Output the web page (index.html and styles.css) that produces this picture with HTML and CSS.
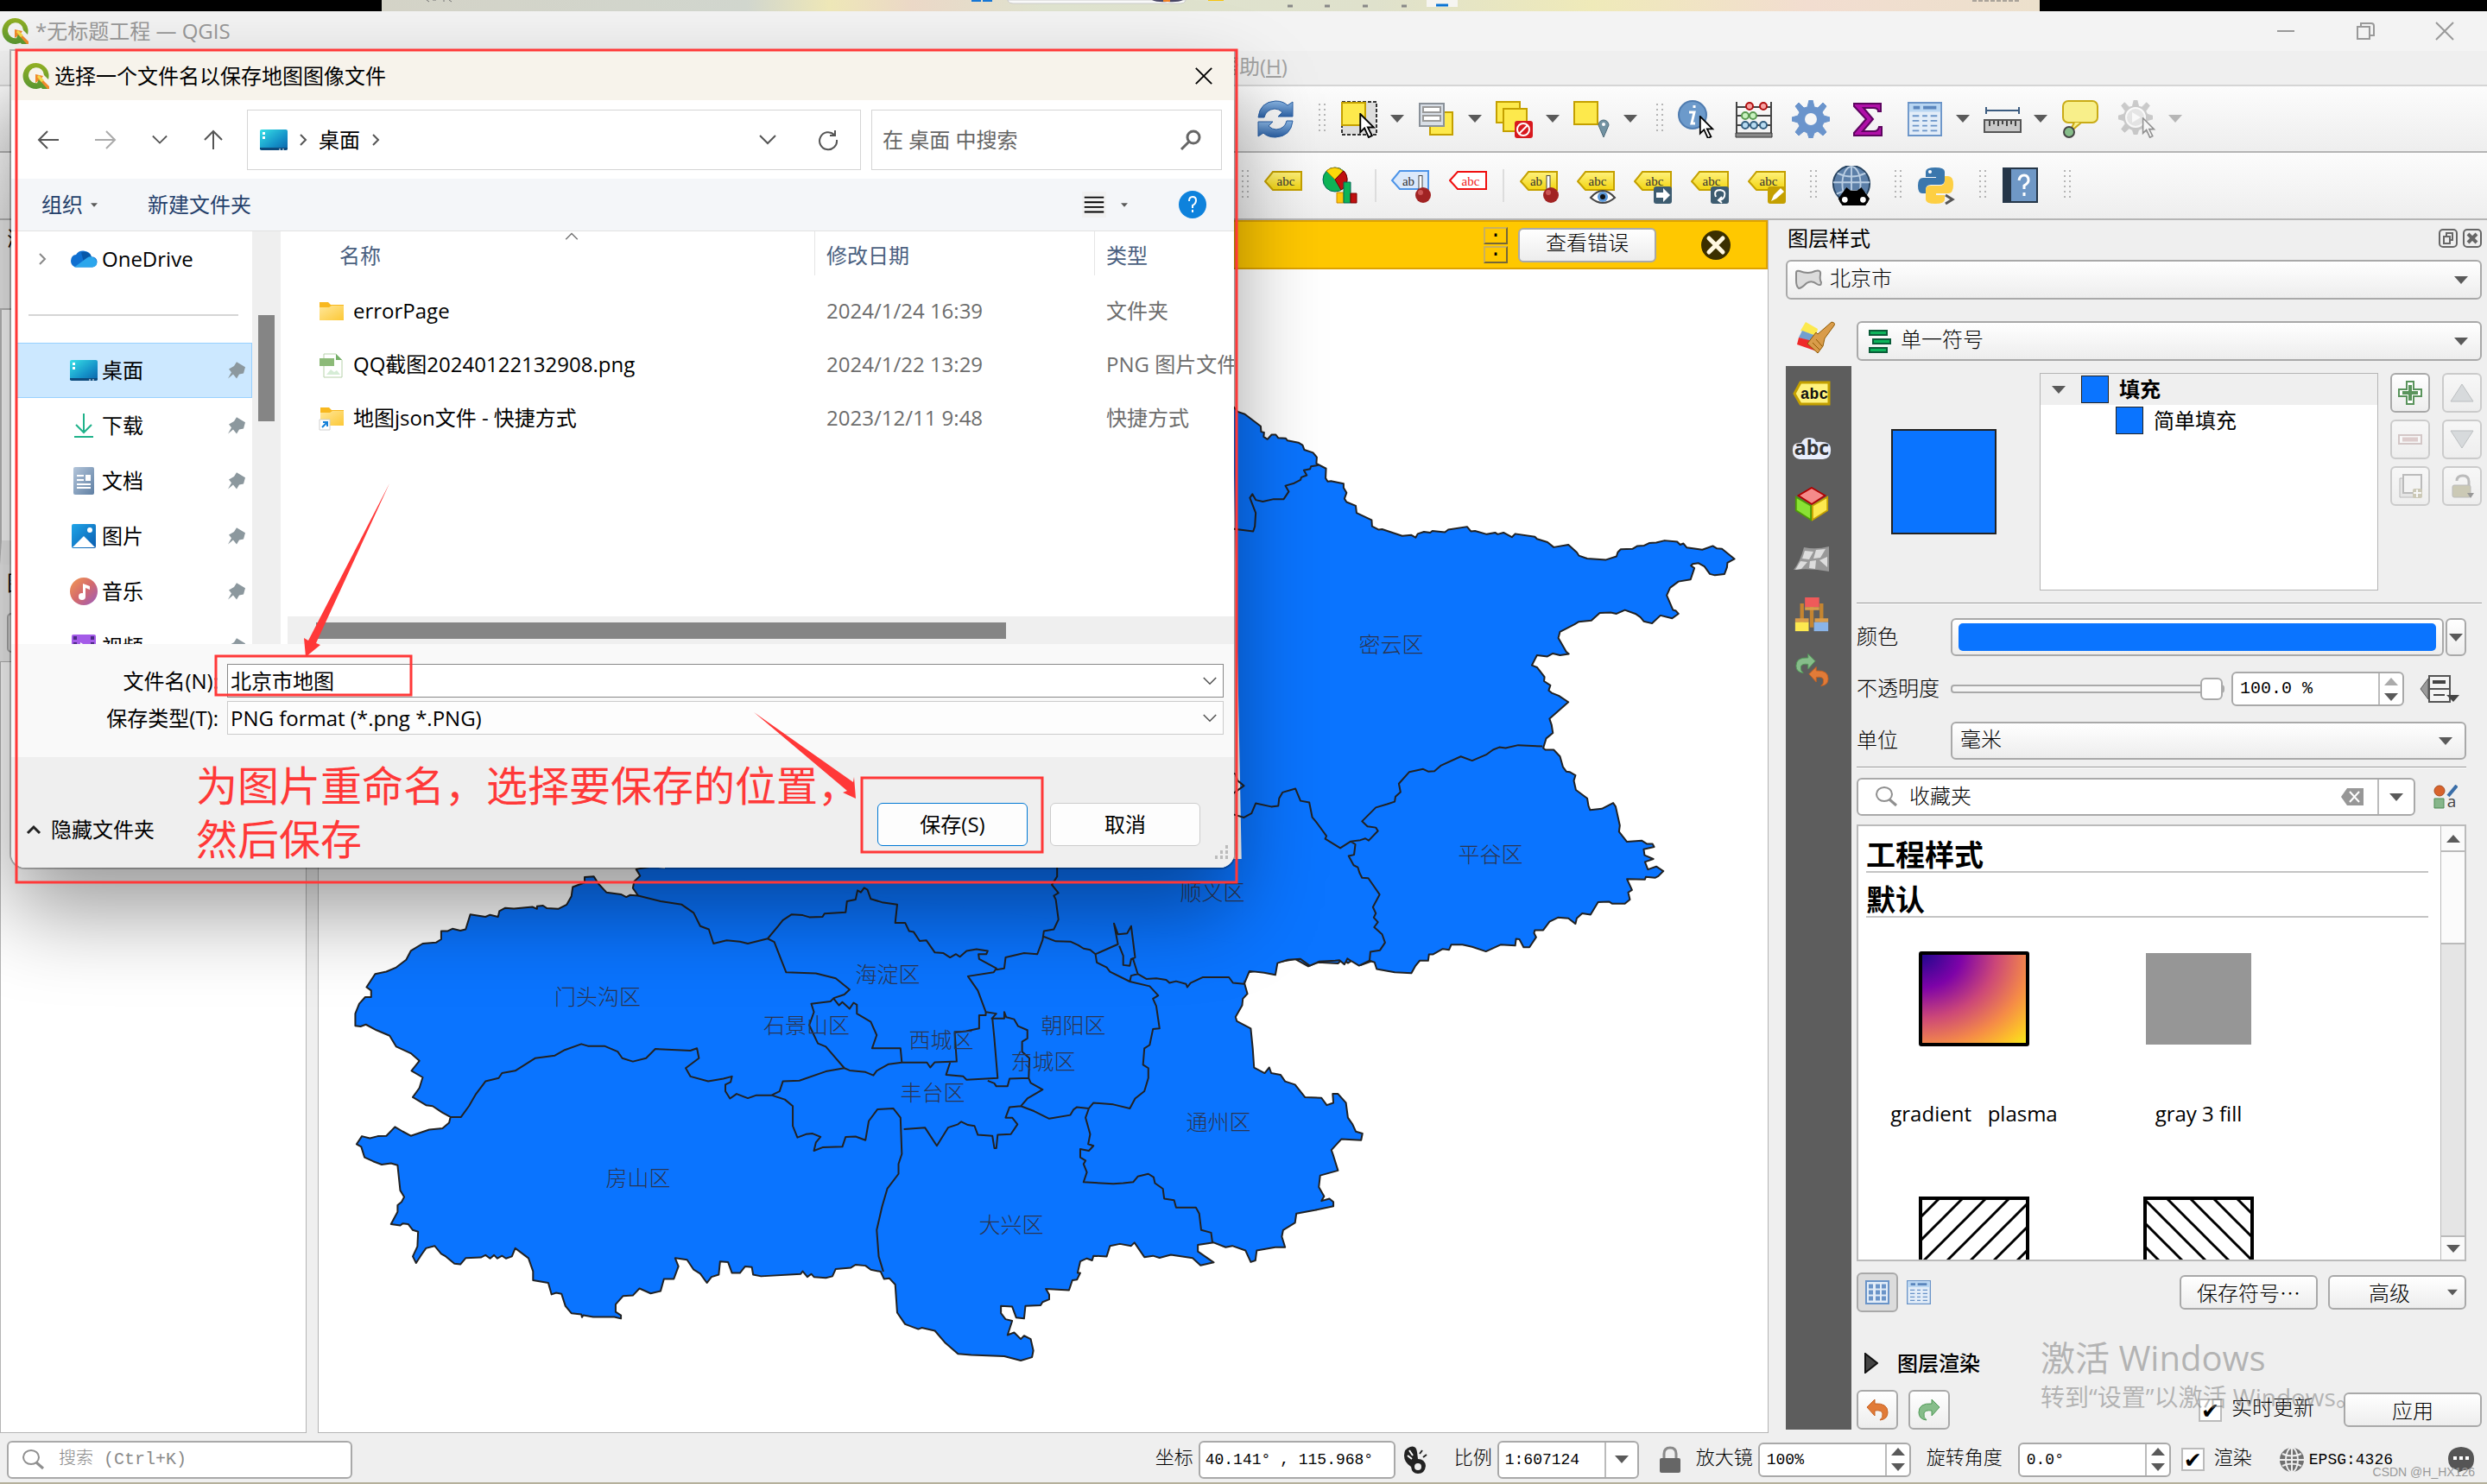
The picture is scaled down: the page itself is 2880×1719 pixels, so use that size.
FILE: index.html
```html
<!DOCTYPE html>
<html lang="zh-CN">
<head>
<meta charset="utf-8">
<meta name="viewport" content="width=device-width, initial-scale=1">
<title>*无标题工程 — QGIS</title>
<link rel="stylesheet" href="styles.css">
</head>
<body>
<svg class="defs" aria-hidden="true">
  <defs>
    <linearGradient id="gDesk" x1="0" y1="0" x2="1" y2="1"><stop offset="0" stop-color="#38e0e6"/><stop offset=".6" stop-color="#1593c9"/><stop offset="1" stop-color="#0b62a8"/></linearGradient>
    <linearGradient id="gFold" x1="0" y1="0" x2="1" y2="1"><stop offset="0" stop-color="#ffe79a"/><stop offset="1" stop-color="#fcc836"/></linearGradient>
    <linearGradient id="gMusic" x1="0" y1="0" x2="1" y2="1"><stop offset="0" stop-color="#f39a52"/><stop offset=".5" stop-color="#d46a6c"/><stop offset="1" stop-color="#9a5cc0"/></linearGradient>
    <linearGradient id="gPic" x1="0" y1="0" x2="1" y2="1"><stop offset="0" stop-color="#1fa5e8"/><stop offset="1" stop-color="#0a5cb0"/></linearGradient>
    <linearGradient id="gDoc" x1="0" y1="0" x2="1" y2="1"><stop offset="0" stop-color="#b3c5da"/><stop offset="1" stop-color="#5f7fa3"/></linearGradient>
    <linearGradient id="gQ" x1="0" y1="0" x2="0" y2="1"><stop offset="0" stop-color="#93b023"/><stop offset="1" stop-color="#589632"/></linearGradient>
    <linearGradient id="gRef" x1="0" y1="0" x2="0" y2="1"><stop offset="0" stop-color="#8ab6e4"/><stop offset="1" stop-color="#2a5fa3"/></linearGradient>
    <linearGradient id="gYel" x1="0" y1="0" x2="0" y2="1"><stop offset="0" stop-color="#fff27e"/><stop offset="1" stop-color="#f2d40f"/></linearGradient>
    <radialGradient id="gPlasma" cx="0" cy="0" r="1.42"><stop offset="0" stop-color="#1c078c"/><stop offset=".27" stop-color="#7e03a8"/><stop offset=".5" stop-color="#cc4778"/><stop offset=".72" stop-color="#f58b47"/><stop offset=".88" stop-color="#fdc328"/><stop offset="1" stop-color="#f4f018"/></radialGradient>
    <pattern id="hatchA" width="27" height="27" patternUnits="userSpaceOnUse" patternTransform="translate(22 4)"><path d="M-2 29 29 -2M-2 2 2 -2M25 29l4-4" stroke="#000" stroke-width="3"/></pattern>
    <pattern id="hatchB" width="27" height="27" patternUnits="userSpaceOnUse" patternTransform="translate(2 4)"><path d="M-2 -2 29 29M25 -2l4 4M-2 25l4 4" stroke="#000" stroke-width="3"/></pattern>
  </defs>
  <symbol id="i-q" viewBox="0 0 32 32"><path d="M16 1a15 15 0 1 0 7 28l-5-5a9 9 0 1 1 7-9l5 5A15 15 0 0 0 16 1z" fill="url(#gQ)"/><path d="m15 14 9 2-2 3 9 9v3h-5l-8-9-3 2z" fill="#f08a2c"/><path d="m19 20 10 11h-6l-6-7z" fill="#5f9a30"/><path d="m19 15 6 6-3 2-5-6z" fill="#f5d94a"/></symbol>
  <symbol id="i-down" viewBox="0 0 16 9"><path d="M0 0h16L8 9z" fill="#5a5a5a"/></symbol>
  <symbol id="i-up" viewBox="0 0 16 9"><path d="M0 9h16L8 0z" fill="#5a5a5a"/></symbol>
  <symbol id="i-chev" viewBox="0 0 20 12"><path d="m1 1 9 9 9-9" fill="none" stroke="currentColor" stroke-width="2"/></symbol>
  <symbol id="i-gt" viewBox="0 0 10 14"><path d="m2 1 6 6-6 6" fill="none" stroke="currentColor" stroke-width="2"/></symbol>
  <symbol id="i-left" viewBox="0 0 26 24"><path d="M25 12H2M12 2 2 12l10 10" fill="none" stroke="currentColor" stroke-width="2"/></symbol>
  <symbol id="i-x" viewBox="0 0 24 24"><path d="m2 2 20 20M22 2 2 22" stroke="currentColor" stroke-width="2"/></symbol>
  <symbol id="i-grip" viewBox="0 0 8 36"><path d="M1 0v36M7 0v36" stroke="#b5b5b5" stroke-width="2" stroke-dasharray="2 4"/></symbol>
  <symbol id="i-glass" viewBox="0 0 26 24"><ellipse cx="10" cy="9" rx="9" ry="8" fill="none" stroke="#8f8f8f" stroke-width="2"/><path d="m16 15 8 7" stroke="#8f8f8f" stroke-width="3"/></symbol>
  <symbol id="i-pin" viewBox="0 0 22 22"><path transform="scale(1 1.2)" d="m11 1 10 5-2 6-5 1-3 4-4-4-6 4 4-6-3-3 6-3z" fill="#8c989e"/></symbol>
  <symbol id="i-desk" viewBox="0 0 32 32"><rect y="4" width="32" height="24" rx="2" fill="url(#gDesk)"/><path d="M0 25h32v2l-2 1H2l-2-1z" fill="#0d4a7c"/><path d="M3 7h3v3H3zM3 12h3v3H3z" fill="#fff"/><path d="M22 27h2m2 0h2" stroke="#fff" stroke-width="1"/></symbol>
  <symbol id="i-cloud" viewBox="0 0 32 32"><g transform="translate(0 5) scale(1 1.2)"><path d="M7 17a6 6 0 0 1 0-12 10 8 0 0 1 18 2 6 5 0 0 1 1 10z" fill="#0f6fd0"/><path d="M13 3a9 8 0 0 1 12 4l-9 5z" fill="#0757a8"/><path d="M5 17 20 8a7 6 0 0 1 11 5q0 4-5 4z" fill="#2ba6ec"/></g></symbol>
  <symbol id="i-dl" viewBox="0 0 32 32"><path d="M16 2v22M7 15l9 9 9-9M5 29h22" fill="none" stroke="#1fb28a" stroke-width="2"/></symbol>
  <symbol id="i-doc" viewBox="0 0 32 32"><rect x="4" width="24" height="32" rx="2" fill="url(#gDoc)"/><path d="M8 10h8M8 15h8M8 20h16M8 24h16" stroke="#fff" stroke-width="2"/><path d="M18 9h6v7h-6z" fill="#fff"/></symbol>
  <symbol id="i-pic" viewBox="0 0 32 32"><rect x="2" y="2" width="28" height="28" rx="2" fill="url(#gPic)"/><path d="m3 29 13-13 13 13z" fill="#fff"/><circle cx="23" cy="9" r="3" fill="#fff"/></symbol>
  <symbol id="i-music" viewBox="0 0 32 32"><circle cx="16" cy="16" r="16" fill="url(#gMusic)"/><circle cx="14" cy="22" r="4" fill="#fff"/><path d="M15 22V7l8 3v4l-5-2v10z" fill="#fff"/></symbol>
  <symbol id="i-vid" viewBox="0 0 32 32"><rect x="2" y="2" width="28" height="28" rx="2" fill="#a45be8"/><path d="M4 4h4v4H4zM24 4h4v4h-4zM4 11h4v4H4zM24 11h4v4h-4z" fill="#4c2a86"/><path d="m12 11 9 6-9 6z" fill="#fff"/></symbol>
  <symbol id="i-fold" viewBox="0 0 30 24"><path d="M1 1h10l3 3h15v18H1z" fill="#f8b81f"/><path d="M1 7h11l3-2h14v17H1z" fill="url(#gFold)"/></symbol>
  <symbol id="i-short" viewBox="0 0 30 30"><path d="M2 2h10l3 3h14v17H2z" fill="#f8b81f"/><path d="M2 8h11l3-2h13v17H2z" fill="url(#gFold)"/><path d="M1 16h12v12H1z" fill="#fff" stroke="#cfcfcf"/><path d="m4 25 5-5M5 19h5v5" fill="none" stroke="#1580d8" stroke-width="2"/></symbol>
  <symbol id="i-png" viewBox="0 0 30 30"><path d="M6 2h14l7 7v20H6z" fill="#fff" stroke="#b7d2aa"/><path d="M20 2v7h7z" fill="#76b06a"/><path d="M1 7h17v9H1z" fill="#8cba78"/><path d="m9 26 5-6 4 3 3-2 4 5z" fill="#d6ecd6"/></symbol>
  <symbol id="i-ptr" viewBox="0 0 20 30"><path d="M2 1v22l5-5 5 11 4-2-5-10h7z" fill="#fff" stroke="#000" stroke-width="2"/></symbol>
  <symbol id="i-tag" viewBox="0 0 44 24"><path d="M10 1h33v21H10L1 12z" fill="url(#gYel)" stroke="#c4a000" stroke-width="2"/></symbol>
  <symbol id="i-undo" viewBox="0 0 26 26"><path d="M1 10 10 1v5q15-1 15 10 0 8-9 9 4-3 3-8-1-4-9-3v6z" fill="#e17b38" stroke="#c8601e"/></symbol>
  <symbol id="i-redo" viewBox="0 0 26 26"><path d="M25 10 16 1v5Q1 5 1 16q0 8 9 9-4-3-3-8 1-4 9-3v6z" fill="#86bd8a" stroke="#4f9a56"/></symbol>
  <symbol id="i-table" viewBox="0 0 42 42"><path d="M1 1h40v40H1z" fill="#e3edf8" stroke="#6a94c8" stroke-width="2"/><path d="M2 2h38v10H2z" fill="#b9d6f2"/><path d="M7 7h8M19 7h16" stroke="#5b86bd" stroke-width="4"/><path d="M6 17h8M18 17h6M28 17h8M6 23h8M18 23h6M28 23h8M6 29h8M18 29h6M28 29h8M6 35h8M18 35h6M28 35h8" stroke="#6a94c8" stroke-width="2"/></symbol>
  <symbol id="i-gear" viewBox="0 0 44 44"><path d="m20 0h4l2 8 4 1 6-6 4 4-5 7 2 4 7 2v4l-7 2-2 4 5 7-4 4-6-5-4 2-2 6h-4l-2-6-4-2-6 5-4-4 5-7-2-4-7-2v-4l7-2 2-4-5-7 4-4 6 6 4-1z" fill="currentColor" stroke="currentColor"/><circle cx="22" cy="22" r="7" fill="#f6f6f6"/></symbol>
  <symbol id="i-globe" viewBox="0 0 32 32"><circle cx="16" cy="16" r="14" fill="#707070"/><path d="M16 2v28M2 16h28M5 9q11 5 22 0M5 23q11-5 22 0" fill="none" stroke="#eee" stroke-width="2"/><ellipse cx="16" cy="16" rx="7" ry="14" fill="none" stroke="#eee" stroke-width="2"/></symbol>
</svg>

<div class="desktop-strip">
  <svg class="taskbar" viewBox="0 0 1920 13" preserveAspectRatio="xMidYMin slice"><path d="M683 0h11v2h-11zM696 0h11v2h-11z" fill="#1677d6"/><path d="M725 0h206v1q-2 3-6 3H731q-4 0-6-3z" fill="#fafafa" stroke="#ccc"/><path d="M892 0h36q-6 3-18 2-12 1-18-2z" fill="#4a4766"/><path d="M905 0h8v2h-8z" fill="#f08228"/><path d="M957 0h18v1h-18z" fill="#f6c40e"/><path d="M1049 7h6M1092 7h6M1136 7h6M1181 7h6" stroke="#888" stroke-width="3"/><path d="M1210 0h36v8h-36z" fill="#f6f5f1"/><path d="M1221 6h14" stroke="#0a74d4" stroke-width="3"/><path d="M1842 1h56" stroke="#666" stroke-dasharray="5 2"/><path d="m52 0 3 2m4-2h4m9 0v2m6-2 3 2" stroke="#777"/></svg>
</div>

<div class="app">
  <header class="titlebar">
    <svg class="s32"><use href="#i-q"/></svg>
    <h1>*无标题工程 — QGIS</h1>
    <div class="winbtns">
      <button type="button" aria-label="最小化"><svg class="s24" viewBox="0 0 24 24"><path d="M2 12h20" stroke="#999" stroke-width="2"/></svg></button>
      <button type="button" aria-label="还原"><svg class="s24" viewBox="0 0 24 24"><path d="M3 7h14v14H3zM7 7V3h12q3 0 3 3v11h-4" fill="none" stroke="#999" stroke-width="2"/></svg></button>
      <button type="button" aria-label="关闭"><svg class="s24"><use href="#i-x"/></svg></button>
    </div>
  </header>
  <nav class="menubar"><a href="#help">帮助(<u>H</u>)</a></nav>

  <div class="toolbar toolbar-a">
    <button type="button" aria-label="刷新"><svg class="s44" viewBox="0 0 44 44"><path d="M2 20Q4 2 22 1q9 0 14 5l6-4v17H25l5-5q-4-4-9-4-10 1-12 10z" fill="url(#gRef)" stroke="#2a5fa3"/><path d="M42 24q-2 18-20 19-9 0-14-5l-6 4V25h17l-5 5q4 4 9 4 10-1 12-10z" fill="url(#gRef)" stroke="#2a5fa3"/></svg></button>
    <span class="grip"><svg><use href="#i-grip"/></svg></span>
    <button type="button" class="drop" aria-label="选择要素"><svg class="s44" viewBox="0 0 44 44"><path d="M2 2h40v38H2z" fill="#ddd" stroke="#333" stroke-width="2" stroke-dasharray="4 2"/><path d="M2 3h27v26H2z" fill="#fde94c" stroke="#c4a000" stroke-width="2"/><use href="#i-ptr" x="18" y="15" width="26" height="29"/></svg><svg class="caret"><use href="#i-down"/></svg></button>
    <button type="button" class="drop" aria-label="按值选择"><svg class="s44" viewBox="0 0 44 44"><path d="M14 14h26v26H14z" fill="#fde94c" stroke="#c4a000" stroke-width="2"/><path d="M2 4h28v26H2z" fill="#d8dee6" stroke="#8a9199" stroke-width="2"/><path d="M6 8h20v6H6zM6 18h20v6H6z" fill="#fff" stroke="#999" stroke-width="2"/></svg><svg class="caret"><use href="#i-down"/></svg></button>
    <button type="button" class="drop" aria-label="取消选择"><svg class="s44" viewBox="0 0 44 44"><path d="M1 2h27v24H1z" fill="#fde94c" stroke="#c4a000" stroke-width="2"/><path d="M9 10h27v26H9z" fill="#fde94c" stroke="#c4a000" stroke-width="2"/><rect x="22" y="24" width="21" height="20" rx="3" fill="#d8191e"/><circle cx="32" cy="34" r="7" fill="none" stroke="#fff" stroke-width="2"/><path d="m27 39 10-10" stroke="#fff" stroke-width="2"/></svg><svg class="caret"><use href="#i-down"/></svg></button>
    <button type="button" class="drop" aria-label="按位置选择"><svg class="s44" viewBox="0 0 44 44"><path d="M1 2h27v26H1z" fill="#fde94c" stroke="#c4a000" stroke-width="2"/><path d="M35 43 29 29a6 6 0 1 1 12 0z" fill="#7292a2" stroke="#4d6b7a"/><circle cx="35" cy="28" r="2" fill="#fff"/></svg><svg class="caret"><use href="#i-down"/></svg></button>
    <span class="grip"><svg><use href="#i-grip"/></svg></span>
    <button type="button" aria-label="识别要素"><svg class="s44" viewBox="0 0 44 44"><circle cx="17" cy="17" r="16" fill="#6c9acb" stroke="#4f7cb0" stroke-width="2"/><path d="M19 6v3M13 14h6l-3 13h4" fill="none" stroke="#fff" stroke-width="3"/><use href="#i-ptr" x="20" y="18" width="26" height="27"/></svg></button>
    <button type="button" aria-label="字段计算器"><svg class="s44" viewBox="0 0 44 44"><path d="M2 2v36M42 2v36M2 8h40M2 18h40M2 29h40" stroke="#444" stroke-width="2"/><path d="M1 38h42v5H1z" fill="#888" stroke="#333"/><g stroke-width="2"><circle cx="17" cy="7" r="4" fill="#f7a3a3" stroke="#b01010"/><circle cx="33" cy="7" r="4" fill="#f7a3a3" stroke="#b01010"/><circle cx="12" cy="18" r="4" fill="#c9f2c0" stroke="#5a9a50"/><circle cx="21" cy="18" r="4" fill="#c9f2c0" stroke="#5a9a50"/><circle cx="12" cy="29" r="4" fill="#b9dcf2" stroke="#345f80"/><circle cx="22" cy="29" r="4" fill="#b9dcf2" stroke="#345f80"/><circle cx="33" cy="29" r="4" fill="#b9dcf2" stroke="#345f80"/></g></svg></button>
    <button type="button" class="blue" aria-label="处理工具箱"><svg class="s44"><use href="#i-gear"/></svg></button>
    <button type="button" aria-label="统计面板"><svg class="s44" viewBox="0 0 44 44"><path d="M6 4h31v9h-3q0-4-6-4H17l11 13-12 14h13q5 0 6-5h3v10H6v-3l14-16L6 7z" fill="#b010a8" stroke="#5e0560" stroke-width="2"/></svg></button>
    <button type="button" class="drop" aria-label="打开属性表"><svg class="s44" viewBox="0 0 44 44"><use href="#i-table" x="2" y="2" width="40" height="40"/></svg><svg class="caret"><use href="#i-down"/></svg></button>
    <button type="button" class="drop" aria-label="测量"><svg class="s44" viewBox="0 0 44 44"><path d="M3 8v8M41 8v8M3 12h38" stroke="#3c5c80" stroke-width="2"/><path d="M1 23h42v14H1z" fill="#c9c9c9" stroke="#555" stroke-width="2"/><path d="M7 24v6M12 24v4M17 24v6M22 24v4M27 24v6M32 24v4M37 24v6" stroke="#444" stroke-width="2"/></svg><svg class="caret"><use href="#i-down"/></svg></button>
    <button type="button" aria-label="地图提示"><svg class="s44" viewBox="0 0 44 44"><rect x="2" y="1" width="40" height="25" rx="6" fill="#f8ef8a" stroke="#c9ab16" stroke-width="2"/><path d="m15 26-6 12 14-12" fill="#f8ef8a" stroke="#c9ab16" stroke-width="2"/><circle cx="9" cy="37" r="6" fill="#86bd8a" stroke="#444" stroke-width="2"/></svg></button>
    <button type="button" class="drop muted" aria-label="运行要素动作"><svg class="s44" viewBox="0 0 44 44"><use href="#i-gear" width="40" height="40"/><circle cx="20" cy="20" r="11" fill="#ccc" stroke="#fff" stroke-width="2"/><path d="m16 14 10 6-10 6z" fill="#fff"/><use href="#i-ptr" x="24" y="20" width="22" height="24"/></svg><svg class="caret"><use href="#i-down"/></svg></button>
  </div>

  <div class="toolbar toolbar-b">
    <span class="grip"><svg><use href="#i-grip"/></svg></span>
    <button type="button" class="tag">
      <svg class="s44" viewBox="0 0 44 44"><use href="#i-tag" y="5" width="44" height="24"/><text x="25" y="22" class="tagtext">abc</text></svg></button>
    <button type="button" aria-label="图表"><svg class="s44" viewBox="0 0 44 44"><ellipse cx="16" cy="15" rx="14" ry="14" fill="#0db457" stroke="#065"/><path d="M16 15 6 5a14 14 0 0 1 19 0z" fill="#fdd90a" stroke="#b80"/><path d="M16 15 26 5a14 14 0 0 1-3 22z" fill="#c01010" stroke="#700"/><path d="M18 30h8v12h-8z" fill="#fdc60a" stroke="#c80"/><path d="M26 18h8v24h-8z" fill="#0db457" stroke="#065"/><path d="M34 31h7v11h-7z" fill="#c01010" stroke="#700"/></svg></button>
    <span class="sep"></span>
    <button type="button"><svg class="s48" viewBox="0 0 48 44"><path d="M11 5h33v21H11L2 16z" fill="#dbe9fb" stroke="#4d94e8" stroke-width="2"/><text x="21" y="22" class="tagtext">ab</text><path d="M35 10v18" stroke="#444" stroke-width="5"/><path d="M35 11v16" stroke="#fff" stroke-width="3"/><circle cx="38" cy="33" r="9" fill="#a12323"/><circle cx="35" cy="30" r="3" fill="#c55"/></svg></button>
    <button type="button"><svg class="s44" viewBox="0 0 44 44"><path d="M10 6h33v20H10L1 16z" fill="#fff" stroke="#f01010" stroke-width="2"/><text x="25" y="22" class="tagtext red">abc</text></svg></button>
    <span class="sep"></span>
    <button type="button"><svg class="s48" viewBox="0 0 48 44"><use href="#i-tag" x="2" y="5" width="44" height="24"/><text x="21" y="22" class="tagtext">ab</text><path d="M35 10v18" stroke="#444" stroke-width="5"/><path d="M35 11v16" stroke="#fff" stroke-width="3"/><circle cx="38" cy="33" r="9" fill="#a12323"/><circle cx="35" cy="30" r="3" fill="#c55"/></svg></button>
    <button type="button"><svg class="s48" viewBox="0 0 48 44"><use href="#i-tag" x="2" y="5" width="44" height="24"/><text x="26" y="22" class="tagtext">abc</text><path d="M18 36q14-16 28 0-14 12-28 0z" fill="#fff" stroke="#444" stroke-width="2"/><circle cx="32" cy="35" r="6" fill="#5b97d8"/><circle cx="32" cy="35" r="3" fill="#111"/></svg></button>
    <button type="button"><svg class="s48" viewBox="0 0 48 44"><use href="#i-tag" x="2" y="5" width="44" height="24"/><text x="26" y="22" class="tagtext">abc</text><rect x="25" y="23" width="21" height="20" rx="3" fill="#3d5c70"/><path d="M28 30h8v-5l8 8-8 8v-5h-8z" fill="#fff"/></svg></button>
    <button type="button"><svg class="s48" viewBox="0 0 48 44"><use href="#i-tag" x="2" y="5" width="44" height="24"/><text x="26" y="22" class="tagtext">abc</text><rect x="25" y="23" width="21" height="20" rx="3" fill="#3d5c70"/><path d="M31 35q-3-8 5-8 7 1 5 7-1 4-6 5M38 35l-4 4 4 3" fill="none" stroke="#fff" stroke-width="2"/></svg></button>
    <button type="button"><svg class="s48" viewBox="0 0 48 44"><use href="#i-tag" x="2" y="5" width="44" height="24"/><text x="26" y="22" class="tagtext">abc</text><rect x="25" y="23" width="21" height="20" rx="3" fill="#c4a000"/><path d="m29 40 3-7 8-8 4 4-9 8z" fill="#fff"/></svg></button>
    <span class="grip"><svg><use href="#i-grip"/></svg></span>
    <button type="button" aria-label="元数据搜索"><svg class="s48" viewBox="0 0 48 48"><circle cx="24" cy="22" r="22" fill="#5c7fa8" stroke="#26425f" stroke-width="2"/><path d="M24 1v42M2 20h44M7 9q17 8 34 0M6 34q18-8 36 0" fill="none" stroke="#b9cde2" stroke-width="2"/><ellipse cx="24" cy="22" rx="11" ry="21" fill="none" stroke="#b9cde2" stroke-width="2"/><path d="m18 26 5 4h8l5-4 10 14-5 8H13l-5-8z" fill="#000"/><circle cx="16" cy="41" r="5" fill="#fff" stroke="#000" stroke-width="3"/><circle cx="38" cy="41" r="5" fill="#fff" stroke="#000" stroke-width="3"/></svg></button>
    <span class="grip"><svg><use href="#i-grip"/></svg></span>
    <button type="button" aria-label="Python 控制台"><svg class="s44" viewBox="0 0 44 44"><path d="M10 12V6q0-5 11-5t11 5v10q0 5-6 5H16q-6 0-6 6v4H6q-5 0-5-9t6-9h15v-1z" fill="#3a77ad"/><path d="M32 11h4q6 0 6 10t-6 10H22v2h10v5q0 5-11 5t-11-5V27q0-5 6-5h10q6 0 6-6z" fill="#fdcf43"/><circle cx="15" cy="6" r="2" fill="#fff"/><path d="m33 33 8 5-8 5" fill="none" stroke="#555" stroke-width="3"/></svg></button>
    <span class="grip"><svg><use href="#i-grip"/></svg></span>
    <button type="button" aria-label="帮助"><svg class="s44" viewBox="0 0 44 44"><path d="M1 1h41v41H1z" fill="#253648"/><path d="M11 3h29v37H11z" fill="#6f98c6"/><path d="M20 16q1-6 6-6t5 6q0 3-5 6v4M26 30v4" fill="none" stroke="#fff" stroke-width="3"/></svg></button>
    <span class="grip"><svg><use href="#i-grip"/></svg></span>
  </div>

  <main class="workspace">
    <aside class="leftdock">
      <h2>浏览</h2>
      <div class="browser"></div>
      <h2>图层</h2>
      <div class="layertools"></div>
      <div class="layers"></div>
    </aside>
    <section class="canvas">
      <div class="message">
        <div class="pager"><button type="button" aria-label="上一条">·</button><button type="button" aria-label="下一条">·</button></div>
        <button type="button" class="btn">查看错误</button>
        <button type="button" class="round" aria-label="关闭消息"><svg viewBox="0 0 34 34"><circle cx="17" cy="17" r="17" fill="#3b2f00"/><path d="m9 9 16 16M25 9 9 25" stroke="#fff8e0" stroke-width="5" stroke-linecap="round"/></svg></button>
      </div>
      <svg class="map" viewBox="369 312 1678 1347" preserveAspectRatio="xMinYMin slice" role="img" aria-label="北京市">
        <path d="M770 995H1590V1111L1560 1111 1437 1104 770 1012z" fill="#0a74ff"/>
        <g class="land" transform="translate(390 1000) scale(.7653 .3827)">
          <path d="M475 10 453 18 459 38 450 55 448 75 456 98 444 96 438 102 430 94 408 88 396 62 389 40 375 42 375 58 357 72 355 100 348 125 335 138 318 136 312 128 303 130 303 138 296 132 268 137 255 135 246 145 244 162 232 156 225 162 202 155 195 200 187 204 175 198 168 205 158 205 158 230 150 240 130 243 112 265 105 292 90 315 75 328 58 335 45 375 52 385 52 405 43 405 34 425 28 455 28 492 36 494 44 488 60 505 80 522 90 555 112 575 125 598 113 628 130 648 125 680 115 708 135 732 145 735 160 755 172 768 170 785 160 802 140 806 112 825 100 812 88 798 75 825 62 826 50 832 38 826 30 850 37 858 42 890 55 902 68 912 82 908 92 914 96 990 102 1010 98 1025 92 1035 92 1055 82 1092 96 1096 100 1090 108 1092 115 1110 123 1115 122 1160 115 1190 120 1210 128 1185 135 1165 148 1158 158 1182 165 1190 178 1212 187 1214 195 1195 218 1193 225 1186 232 1196 238 1186 243 1196 250 1188 256 1196 265 1190 270 1165 290 1195 297 1235 297 1262 320 1270 325 1305 332 1300 340 1303 346 1340 355 1362 370 1365 371 1374 373 1368 388 1373 420 1373 430 1378 430 1368 422 1358 422 1335 433 1310 448 1308 458 1287 475 1302 490 1295 495 1258 510 1258 517 1220 512 1195 530 1200 540 1230 550 1242 560 1270 567 1252 578 1245 580 1205 592 1207 598 1240 610 1240 618 1220 628 1222 630 1245 642 1250 702 1243 705 1235 712 1252 718 1243 722 1252 740 1255 750 1250 755 1228 778 1224 785 1215 800 1218 808 1230 823 1236 828 1258 836 1256 845 1275 848 1360 860 1395 880 1410 885 1406 905 1415 920 1450 940 1485 960 1488 1010 1492 1035 1505 1052 1495 1054 1475 1050 1440 1040 1430 1035 1440 1025 1420 1015 1428 1022 1385 1012 1380 1005 1362 1005 1340 1022 1342 1028 1375 1040 1378 1042 1340 1065 1338 1068 1328 1078 1320 1078 1305 1073 1288 1108 1292 1113 1262 1120 1260 1125 1240 1121 1240 1125 1205 1135 1196 1143 1202 1145 1188 1165 1190 1170 1158 1185 1152 1202 1158 1207 1148 1222 1192 1235 1188 1245 1194 1262 1185 1295 1195 1307 1217 1327 1208 1303 1175 1303 1155 1327 1148 1345 1162 1355 1158 1375 1172 1383 1207 1390 1202 1392 1172 1420 1162 1435 1162 1430 1130 1432 1110 1450 1088 1452 1060 1480 1050 1508 1038 1508 1025 1502 1015 1490 1022 1494 1008 1486 980 1488 945 1515 930 1508 885 1505 868 1520 835 1550 838 1552 818 1542 812 1537 790 1530 770 1527 725 1515 698 1507 698 1508 725 1498 732 1490 710 1465 708 1450 670 1435 660 1428 640 1414 635 1411 618 1404 635 1388 618 1386 560 1383 500 1362 478 1360 465 1370 430 1371 410 1378 395 1373 360 1380 330 1395 325 1418 335 1422 300 1450 290 1470 312 1485 300 1515 303 1522 290 1530 302 1538 292 1550 308 1568 295"/>
          <path class="ln" d="M456 98 490 115 522 125 540 150 550 190 563 200 570 243 590 233 610 237 622 243 652 228 662 238 672 290 680 330 725 333 755 348 776 382 768 397 752 408 747 418 718 425 722 450 715 490 722 520 728 545 740 555 768 620 776 627 800 632 812 642 817 628 835 608 855 603 853 560 810 560 817 520 808 480 787 455 787 428 782 422 776 440 765 420 760 430 752 410M652 228 668 190 675 172 688 155 705 157 715 163 735 162 738 152 770 148 772 115 785 110 788 82 793 88 798 74 803 80 808 108 825 118 848 125 845 180 860 180 866 205 873 208 882 235 892 233 905 270 918 272 928 285 937 275 943 283 953 265 968 260 985 265 983 275 971 275 972 290 998 318 994 330 955 342 970 385 982 450 982 460 972 460 972 500 952 508 935 512 938 600 905 602 898 618 893 603 855 603M998 322 1010 318 1012 285 1040 272 1060 275 1068 232 1070 205 1085 200 1092 170 1088 110 1085 98 1092 90 1082 65 1090 40V13M1070 222 1088 236 1110 237 1122 248 1130 258 1140 262 1148 275 1182 245 1176 182 1182 215 1196 212 1202 190 1208 285 1202 290 1200 310 1190 308 1190 280 1184 250M1205 290 1212 335 1202 340 1200 358M1212 335 1225 350 1240 348 1255 353 1260 362 1270 357 1285 365 1287 375 1292 362 1310 345 1330 345 1350 345 1356 362 1373 365M1148 275 1150 300 1165 315 1170 328 1200 358 1230 372 1243 400 1235 410 1240 432 1245 500 1235 502 1230 550 1222 560 1220 610 1228 620 1228 650 1222 690 1208 712 1200 742 1175 730 1145 725 1138 742 1120 738 1115 745 1110 762 1078 773 1055 750 1035 735M1138 742 1133 770 1140 820 1137 850 1145 855 1138 870 1125 865 1125 890 1133 900 1130 910 1135 935 1130 965 1175 970 1190 968 1205 965 1212 948 1228 940 1236 950 1238 968 1250 985 1252 1015 1267 1020 1270 1042 1300 1042 1305 1060 1308 1110 1323 1118 1325 1148M982 450 998 455 992 468 995 530 1000 650 953 655 948 645 922 640 928 603M990 470 1010 470 1010 450 1013 466 1025 472 1031 493 1045 505 1045 530 1037 540 1037 570 1048 590 1047 650 1018 652 1015 675 998 675 995 666 985 658M1047 650 1050 665 1068 685 1045 712 1035 735 1018 738 1012 770 1022 770 1030 790 1020 820 1000 822 998 862 995 862 992 825 970 822 965 795 955 792 945 782 940 790 925 800 908 855 890 800 858 805M768 620 740 630 700 658 675 660 670 690 658 702 678 715 690 735 690 795 697 830 710 820 720 818 732 828 725 845 722 870 735 860 765 858 770 828 785 827 800 838 805 780 818 745 842 742 853 770 855 880 850 910 850 940 833 985 825 1040 817 1110 820 1190 827 1236M172 768 188 768 200 735 210 700 225 660 245 650 250 635 270 628 300 590 330 582 345 565 370 547 380 553 405 553 425 570 432 590 448 600 468 590 482 562 535 567 545 560 548 590 528 620 535 645 562 660 585 652 598 645 596 662 588 670 588 690 595 712 605 698 622 711 635 702 658 702"/>
        </g>
        <g class="land" transform="translate(1300 440) scale(.4847)">
          <path d="M263 62 275 76 292 82 330 111 331 124 338 126 337 136 346 142 356 131 366 131 372 139 390 140 394 145 420 150 430 156 434 167 455 174 464 185 463 200 486 212 485 235 490 243 498 242 528 248 528 258 535 270 530 284 535 292 557 301 559 318 595 335 596 350 612 358 620 357 668 373 690 371 700 377 705 368 720 363 735 365 740 361 770 364 778 358 823 351 832 362 842 361 870 369 890 365 896 369 910 365 930 376 938 368 985 375 990 380 1015 388 1030 400 1065 394 1085 412 1090 420 1110 427 1155 430 1180 422 1183 412 1190 405 1218 404 1230 397 1246 396 1258 390 1275 389 1295 384 1325 387 1332 394 1340 391 1348 401 1385 406 1410 397 1420 403 1432 404 1462 428 1445 437 1444 448 1438 464 1415 467 1403 464 1390 446 1376 438 1362 440 1358 444 1366 450 1357 477 1328 482 1308 497 1300 515 1315 550 1322 552 1328 559 1313 570 1285 563 1265 582 1245 577 1237 567 1225 559 1200 550 1180 559 1166 556 1140 557 1120 575 1090 578 1080 584 1045 602 1041 617 1060 650 1066 655 1045 658 1028 654 1015 661 990 658 978 682 990 687 1008 710 1007 720 1022 730 1018 742 1025 748 1042 755 1065 770 1020 810 1025 825 1028 844 1012 857 1005 880 1010 884 1030 884 1045 900 1052 925 1060 936 1068 937 1082 945 1078 958 1083 980 1110 1000 1113 1018 1117 1028 1145 1025 1172 1011 1178 1020 1188 1065 1186 1080 1205 1104 1240 1101 1253 1109 1266 1109 1270 1116 1245 1122 1247 1136 1268 1145 1248 1152 1255 1170 1275 1163 1292 1174 1280 1186 1272 1190 1250 1188 1248 1194 1205 1193 1217 1219 1208 1225 1212 1242 1200 1252 1170 1252 1162 1247 1136 1248 1118 1278 1098 1275 1085 1287 1082 1300 1065 1287 1040 1285 1020 1295 1005 1315 985 1315 983 1322 988 1332 972 1356 958 1356 948 1337 940 1336 938 1352 903 1350 868 1366 835 1355 812 1350 785 1350 780 1362 765 1360 742 1373 732 1373 730 1388 710 1388 700 1400 690 1418 650 1416 607 1408 602 1392 590 1388 565 1400 548 1390 537 1383 530 1397 518 1387 508 1388 470 1390 447 1400 425 1384 395 1386 370 1394 365 1422 338 1417 303 1413 290 1445"/>
          <path class="ln" d="M468 204 450 207 448 213 433 216 440 228 427 233 425 239 410 247 389 253 397 267 385 285 361 285 335 291 318 287 310 273 304 282 318 318 316 350 312 362 263 356M263 1038 290 1046 308 1036 318 1012 355 1020 372 1018 374 1000 382 986 413 977 425 1006 446 1010 453 1045 462 1056 487 1090 484 1097 520 1119 545 1103 568 1100 580 1096 588 1101 610 1078 605 1070 585 1067 572 1055 605 1022 632 1014 650 1008 652 996 664 985 660 965 685 937 718 930 730 936 745 935 760 922 808 900 835 910 870 895 885 884 900 878 915 880 945 873 1003 876M545 1103 556 1110 553 1135 540 1138 552 1160 562 1165 566 1178 572 1190 587 1191 614 1230 598 1260 605 1275 600 1285 610 1296 601 1308 620 1325 627 1345 615 1363 592 1367 590 1388M263 940 270 942 274 957 290 970 265 988"/>
        </g>
        <g class="names">
          <text x="1611" y="756">密云区</text><text x="1726" y="999">平谷区</text><text x="1404" y="1043">顺义区</text><text x="1028" y="1138">海淀区</text><text x="692" y="1164">门头沟区</text><text x="934" y="1197">石景山区</text><text x="1090" y="1214">西城区</text><text x="1243" y="1197">朝阳区</text><text x="1208" y="1239">东城区</text><text x="1080" y="1275">丰台区</text><text x="1411" y="1309">通州区</text><text x="739" y="1374">房山区</text><text x="1171" y="1428">大兴区</text>
        </g>
      </svg>
    </section>

    <aside class="styling">
      <div class="dockhead"><h2>图层样式</h2>
        <button type="button" aria-label="浮动"><svg viewBox="0 0 22 22"><rect x="1" y="1" width="20" height="20" rx="4" fill="none" stroke="#666" stroke-width="2"/><path d="M6 9h7v8H6zM9 9V5h7v8h-3" fill="none" stroke="#666" stroke-width="2"/></svg></button>
        <button type="button" aria-label="关闭"><svg viewBox="0 0 22 22"><rect x="1" y="1" width="20" height="20" rx="4" fill="none" stroke="#666" stroke-width="2"/><path d="m6 6 10 10M16 6 6 16" stroke="#666" stroke-width="4"/></svg></button>
      </div>
      <div class="combo layer"><svg class="s32" viewBox="0 0 32 24"><path d="M2 4q0-3 4-2 10 4 18 0 7-2 6 4-1 6 1 9 0 5-5 2-6-5-12-1-6 6-9 6-3-2-3-9z" fill="#dcdcdc" stroke="#8a8a8a" stroke-width="2"/></svg><select aria-label="图层"><option>北京市</option></select><svg class="caret"><use href="#i-down"/></svg></div>
      <div class="stylebody">
        <div class="tabs">
          <button type="button" class="on" aria-label="符号化"><svg class="s44" viewBox="0 0 44 36"><path d="m10 0 14 8-2 8-18-6z" fill="#fce94f"/><path d="m6 10 16 6-2 8-18-6z" fill="#729fcf"/><path d="m2 18 16 4 2 8 3 4L0 26z" fill="#ef2929"/><path d="M22 12 24 14 40 0q5 1 3 4L32 19l-2 9-6 8-12-11z" fill="#d99c4a" stroke="#8f5902"/><path d="m18 24 8 8m-4-12 7 8" stroke="#8f5902"/></svg></button>
          <button type="button" aria-label="标注"><svg class="s44" viewBox="0 0 44 28"><path d="M9 1h33v25H9L2 14z" fill="#fff27e" stroke="#c4a000" stroke-width="3"/><text x="25" y="20" class="bold">abc</text></svg></button>
          <button type="button" aria-label="遮罩"><svg class="s48" viewBox="0 0 48 28"><path d="M2 14Q2 6 12 7 15 0 22 1q6 0 7 5 17-2 17 8 1 11-9 12H10Q1 24 2 14z" fill="#e8edfb"/><text x="24" y="21" class="bold big">abc</text></svg></button>
          <button type="button" aria-label="三维视图"><svg class="s44" viewBox="0 0 44 44"><path d="M22 1 39 11 22 22 5 11z" fill="#f58a8a" stroke="#b00000" stroke-width="2"/><path d="m2 13 19 11v18L2 30z" fill="#8ae234" stroke="#4e9a06" stroke-width="2"/><path d="M42 13 23 24v18l19-12z" fill="#fce94f" stroke="#c4a000" stroke-width="2"/></svg></button>
          <button type="button" aria-label="图表"><svg class="s44" viewBox="0 0 44 32"><path d="M13 2q14 3 29-1v29q-20-4-41-2Q9 18 13 2z" fill="#999"/><path d="m14 6 10 1-5 9-8-1zM27 5l11-1-6 10-8 1zM9 18l8 1-7 8-7 1zM20 18l7-1-1 10-7-1zM31 17l9-4v12z" fill="#ddd"/></svg></button>
          <button type="button" aria-label="字段"><svg class="s44" viewBox="0 0 44 46"><path d="M22 12v28M9 8v26M35 8v26" stroke="#c58530" stroke-width="5"/><path d="M13 0h19v13H13z" fill="#ef5a5a"/><path d="M13 13h19v4H13zM0 28h18v5H0zM26 28h18v5H26z" fill="#d99c4a"/><path d="M0 33h18v12H0z" fill="#fce94f"/><path d="M25 33h19v12H25z" fill="#8ab4e8"/></svg></button>
          <button type="button" aria-label="历史"><svg class="s44" viewBox="0 0 44 40"><use href="#i-redo" x="3" width="24" height="25"/><use href="#i-undo" x="18" y="15" width="24" height="25"/></svg></button>
        </div>
        <div class="props">
          <div class="combo"><svg class="s32" viewBox="0 0 32 28"><path d="M5 2h20v5H5zM9 12h20v5H9zM5 22h20v5H5z" fill="#0db45b" stroke="#0a5c38" stroke-width="2"/></svg><select aria-label="渲染方式"><option>单一符号</option></select><svg class="caret"><use href="#i-down"/></svg></div>
          <div class="symbol">
            <div class="preview"><span></span></div>
            <ul class="tree">
              <li class="root"><svg class="caret"><use href="#i-down"/></svg><i></i><b>填充</b></li>
              <li class="leaf"><i></i>简单填充</li>
            </ul>
            <div class="symbtns">
              <button type="button" class="btn" aria-label="添加"><svg viewBox="0 0 28 28"><path d="M10 1h8v9h9v8h-9v9h-8v-9H1v-8h9z" fill="#fff" stroke="#5a945c" stroke-width="2"/><path d="M14 5v18M5 14h18" stroke="#5a945c" stroke-width="4"/></svg></button>
              <button type="button" class="btn" disabled aria-label="上移"><svg viewBox="0 0 28 28"><path d="M14 4 27 24H1z" fill="#c0c6ca" stroke="#8a9094"/></svg></button>
              <button type="button" class="btn" disabled aria-label="移除"><svg viewBox="0 0 28 28"><path d="M1 9h26v10H1z" fill="#fff" stroke="#b9a0a0" stroke-width="2"/><path d="M5 14h18" stroke="#caa" stroke-width="5"/></svg></button>
              <button type="button" class="btn" disabled aria-label="下移"><svg viewBox="0 0 28 28"><path d="M14 24 27 4H1z" fill="#c0c6ca" stroke="#8a9094"/></svg></button>
              <button type="button" class="btn" disabled aria-label="复制"><svg viewBox="0 0 28 28"><path d="M2 5h18v22H2z" fill="#ddd" stroke="#888"/><path d="M6 1h21v21H6z" fill="#f8f8f8" stroke="#888" stroke-width="2"/><rect x="17" y="17" width="11" height="11" rx="2" fill="#aaa480"/><path d="M22 18v9M18 22h9" stroke="#fff" stroke-width="2"/></svg></button>
              <button type="button" class="btn" disabled aria-label="锁定"><svg viewBox="0 0 28 28"><path d="M8 8q0-6 7-6t7 7v5" fill="none" stroke="#888" stroke-width="3"/><rect x="3" y="13" width="21" height="14" rx="2" fill="#a8a47c" stroke="#888"/><path d="M20 22h8l-4 6z" fill="#444"/></svg></button>
            </div>
          </div>
          <hr>
          <div class="inset">
            <div class="row"><label for="color">颜色</label><button type="button" id="color" class="btn color"><span></span></button><button type="button" class="btn slim" aria-label="颜色菜单"><svg class="caret"><use href="#i-down"/></svg></button></div>
            <div class="row"><label for="alpha">不透明度</label><input type="range" id="alpha" min="0" max="100" value="100"><div class="spin alpha"><input type="text" value="100.0 %" aria-label="不透明度值"><div><button type="button" aria-label="增"><svg class="dim"><use href="#i-up"/></svg></button><button type="button" aria-label="减"><svg><use href="#i-down"/></svg></button></div></div><button type="button" class="plain" aria-label="数据定义"><svg class="s46" viewBox="0 0 46 34"><path d="M10 5 1 17l9 12z" fill="#999" stroke="#555"/><path d="M11 2h24v30H11zM11 17h24" fill="#f4f4f4" stroke="#555" stroke-width="2"/><path d="M15 9h15" stroke="#444" stroke-width="4"/><path d="M16 24h13" stroke="#444" stroke-width="2"/><path d="M31 24h15l-7 8z" fill="#444"/></svg></button></div>
            <div class="row"><label for="unit">单位</label><div class="combo unit"><select id="unit"><option>毫米</option></select><svg class="caret"><use href="#i-down"/></svg></div></div>
            <hr>
            <div class="row fav"><div class="searchbox"><svg class="s26"><use href="#i-glass"/></svg><input type="text" value="收藏夹" aria-label="筛选符号"><svg class="s26" viewBox="0 0 26 20"><path d="M7 0h19v20H7L0 10z" fill="#979797"/><path d="m10 4 11 12M21 4 10 16" stroke="#fff" stroke-width="2"/></svg><button type="button" class="plain" aria-label="组"><svg class="caret"><use href="#i-down"/></svg></button></div><button type="button" class="plain" aria-label="样式管理"><svg class="s28" viewBox="0 0 28 28"><circle cx="7" cy="7" r="6" fill="#d8632c" stroke="#a5481c"/><path d="M27 1 17 13" stroke="#3a6ea8" stroke-width="4"/><path d="M1 16h11v11H1z" fill="#86b68a" stroke="#4d8a53"/><text x="21" y="26" class="a">a</text></svg></button></div>
            <div class="library">
              <div class="shelf">
                <h3>工程样式</h3>
                <h3>默认</h3>
                <div class="swatches">
                  <figure><svg viewBox="0 0 128 110"><rect x="2" y="2" width="124" height="106" rx="1" fill="url(#gPlasma)" stroke="#000" stroke-width="4"/></svg><figcaption>gradient&nbsp;&nbsp; plasma</figcaption></figure>
                  <figure><svg viewBox="0 0 128 110"><path d="M3 2h122v106H3z" fill="#969696"/></svg><figcaption>gray 3 fill</figcaption></figure>
                  <figure><svg viewBox="0 0 128 110"><rect x="2" y="2" width="124" height="106" fill="url(#hatchA)" stroke="#000" stroke-width="4"/></svg></figure>
                  <figure><svg viewBox="0 0 128 110"><rect x="2" y="2" width="124" height="106" fill="url(#hatchB)" stroke="#000" stroke-width="4"/></svg></figure>
                </div>
              </div>
              <div class="vbar"><button type="button" aria-label="向上"><svg class="caret"><use href="#i-up"/></svg></button><span class="thumb"></span><button type="button" class="end" aria-label="向下"><svg class="caret"><use href="#i-down"/></svg></button></div>
            </div>
            <div class="row views">
              <button type="button" class="btn sq on" aria-label="图标视图"><svg class="s28" viewBox="0 0 28 28"><path d="M1 1h26v26H1z" fill="#e3edf8" stroke="#6a94c8" stroke-width="2"/><path d="M4 7h5M12 7h5M19 7h5M4 14h5M12 14h5M19 14h5M4 21h5M12 21h5M19 21h5" stroke="#6a94c8" stroke-width="5"/></svg></button>
              <button type="button" class="plain" aria-label="列表视图"><svg class="s28"><use href="#i-table"/></svg></button>
              <button type="button" class="btn wide push">保存符号…</button>
              <button type="button" class="btn wide menu"><span>高级</span><svg><use href="#i-down"/></svg></button>
            </div>
          </div>
          <div class="render"><svg viewBox="0 0 16 24"><path d="m1 1 14 11L1 23z" fill="#444" stroke="#111" stroke-width="2"/></svg><b>图层渲染</b></div>
          <div class="row apply">
            <button type="button" class="btn sq" aria-label="撤销"><svg class="s26"><use href="#i-undo"/></svg></button>
            <button type="button" class="btn sq" aria-label="重做"><svg class="s26"><use href="#i-redo"/></svg></button>
            <label class="push check"><input type="checkbox" checked>实时更新</label>
            <button type="button" class="btn wide">应用</button>
          </div>
        </div>
      </div>
      <div class="watermark"><p class="big">激活 Windows</p><p>转到“设置”以激活 Windows。</p></div>
    </aside>
  </main>

  <footer class="status">
    <div class="locator"><svg class="s26"><use href="#i-glass"/></svg><input type="text" placeholder="搜索 (Ctrl+K)" aria-label="搜索"></div>
    <label class="first" for="coord">坐标</label><input type="text" id="coord" class="field" value="40.141° , 115.968°">
    <svg class="mouse" viewBox="0 0 30 34"><path d="M9 2q7-2 8 6l1 8q8 0 9 8-1 9-9 9-7 0-8-8Q2 20 2 12 2 4 9 2z" fill="#222"/><path d="m8 6 4 6M6 12l5 4" stroke="#fff" stroke-width="2"/><circle cx="18" cy="25" r="4" fill="#eee"/><path d="m20 10 3-4m1 8 4-3" stroke="#222" stroke-width="2"/></svg>
    <label class="g30" for="scale">比例</label><div class="scale"><input type="text" id="scale" value="1:607124"><button type="button" class="plain" aria-label="比例列表"><svg class="caret"><use href="#i-down"/></svg></button></div>
    <svg class="lock" viewBox="0 0 24 32"><path d="M5 15V9q0-7 7-7t7 7v6" fill="none" stroke="#8a8a8a" stroke-width="3"/><rect y="14" width="24" height="17" rx="2" fill="#666"/></svg>
    <label class="g18" for="mag">放大镜</label><div class="spin"><input type="text" id="mag" value="100%"><div><button type="button" aria-label="增"><svg><use href="#i-up"/></svg></button><button type="button" aria-label="减"><svg><use href="#i-down"/></svg></button></div></div>
    <label class="g18" for="rot">旋转角度</label><div class="spin g18"><input type="text" id="rot" value="0.0°"><div><button type="button" aria-label="增"><svg><use href="#i-up"/></svg></button><button type="button" aria-label="减"><svg><use href="#i-down"/></svg></button></div></div>
    <label class="check g12"><input type="checkbox" checked>渲染</label>
    <a class="crs g30" href="#crs"><svg class="s32"><use href="#i-globe"/></svg>EPSG:4326</a>
    <svg class="bubble" viewBox="0 0 32 32"><path d="M16 1q15 1 15 14t-12 13l-7 3v-3Q1 26 1 15 1 2 16 1z" fill="#555"/><path d="M7 14h4m3 0h4m3 0h4" stroke="#fff" stroke-width="4"/></svg>
    <span class="credit">CSDN @H_HX126</span>
  </footer>
</div>

<section class="dialog" role="dialog" aria-label="选择一个文件名以保存地图图像文件">
  <header><svg class="s32"><use href="#i-q"/></svg><h2>选择一个文件名以保存地图图像文件</h2><button type="button" class="plain" aria-label="关闭"><svg class="s22"><use href="#i-x"/></svg></button></header>
  <div class="nav">
    <div class="arrows">
      <button type="button" class="plain" aria-label="后退"><svg class="s26"><use href="#i-left"/></svg></button>
      <button type="button" class="plain fwd" aria-label="前进"><svg class="s26" viewBox="0 0 26 24"><path d="M1 12h23M14 2l10 10-10 10" fill="none" stroke="currentColor" stroke-width="2"/></svg></button>
      <button type="button" class="plain" aria-label="最近位置"><svg class="s18"><use href="#i-chev"/></svg></button>
      <button type="button" class="plain" aria-label="上移"><svg class="s26" viewBox="0 0 26 24"><path d="M13 23V2M3 12 13 2l10 10" fill="none" stroke="currentColor" stroke-width="2"/></svg></button>
    </div>
    <div class="address"><svg class="s32"><use href="#i-desk"/></svg><svg class="s14"><use href="#i-gt"/></svg><a href="#desktop">桌面</a><svg class="s14"><use href="#i-gt"/></svg>
      <button type="button" class="plain push" aria-label="历史"><svg class="s20"><use href="#i-chev"/></svg></button>
      <button type="button" class="plain" aria-label="刷新"><svg class="s26" viewBox="0 0 26 26"><path d="M20 7a10 10 0 1 0 3 6M21 2v6h-6" fill="none" stroke="currentColor" stroke-width="2"/></svg></button></div>
    <div class="find"><input type="text" placeholder="在 桌面 中搜索" aria-label="搜索"><svg class="s26" viewBox="0 0 26 26"><circle cx="16" cy="10" r="7" fill="none" stroke="#666" stroke-width="3"/><path d="M11 15 2 24" stroke="#666" stroke-width="3"/></svg></div>
  </div>
  <div class="tools">
    <button type="button" class="plain">组织<svg><use href="#i-down"/></svg></button>
    <button type="button" class="plain">新建文件夹</button>
    <button type="button" class="plain push view" aria-label="视图"><svg class="s30" viewBox="0 0 30 32"><path d="M0 0h30v32H0z" fill="#f1f1f1"/><path d="M3 7h24M3 13h24M3 19h24M3 25h24" stroke="#000" stroke-width="2"/></svg><svg><use href="#i-down"/></svg></button>
    <button type="button" class="plain" aria-label="帮助"><svg class="s34" viewBox="0 0 34 34"><circle cx="17" cy="17" r="16" fill="#0e82dc"/><path d="M13 13q0-5 4-5t4 4-4 6v3M17 23v3" fill="none" stroke="#fff" stroke-width="2"/></svg></button>
  </div>
  <div class="files">
    <nav class="places">
      <a href="#onedrive" class="od"><svg class="s14"><use href="#i-gt"/></svg><svg class="s32"><use href="#i-cloud"/></svg>OneDrive</a>
      <hr>
      <a href="#desktop" class="on"><svg class="s32"><use href="#i-desk"/></svg>桌面<svg class="pin"><use href="#i-pin"/></svg></a>
      <a href="#downloads"><svg class="s32"><use href="#i-dl"/></svg>下载<svg class="pin"><use href="#i-pin"/></svg></a>
      <a href="#documents"><svg class="s32"><use href="#i-doc"/></svg>文档<svg class="pin"><use href="#i-pin"/></svg></a>
      <a href="#pictures"><svg class="s32"><use href="#i-pic"/></svg>图片<svg class="pin"><use href="#i-pin"/></svg></a>
      <a href="#music"><svg class="s32"><use href="#i-music"/></svg>音乐<svg class="pin"><use href="#i-pin"/></svg></a>
      <a href="#videos"><svg class="s32"><use href="#i-vid"/></svg>视频<svg class="pin"><use href="#i-pin"/></svg></a>
    </nav>
    <div class="placebar"><span></span></div>
    <div class="listing">
      <svg class="sort" viewBox="0 0 20 12"><path d="m1 11 9-9 9 9" fill="none" stroke="currentColor" stroke-width="2"/></svg>
      <table>
        <colgroup><col class="c1"><col class="c2"><col class="c3"></colgroup>
        <thead><tr><th><span>名称</span></th><th><span>修改日期</span></th><th><span>类型</span></th></tr></thead>
        <tbody>
          <tr><td><svg class="s30"><use href="#i-fold"/></svg>errorPage</td><td>2024/1/24 16:39</td><td>文件夹</td></tr>
          <tr><td><svg class="s30"><use href="#i-png"/></svg>QQ截图20240122132908.png</td><td>2024/1/22 13:29</td><td>PNG 图片文件</td></tr>
          <tr><td><svg class="s30"><use href="#i-short"/></svg>地图json文件 - 快捷方式</td><td>2023/12/11 9:48</td><td>快捷方式</td></tr>
        </tbody>
      </table>
      <div class="hbar"><span></span></div>
    </div>
  </div>
  <div class="fields">
    <label for="fname">文件名(N):</label><div class="fbox strong"><input type="text" id="fname" value="北京市地图"><svg class="s16"><use href="#i-chev"/></svg></div>
    <label for="ftype">保存类型(T):</label><div class="fbox"><select id="ftype"><option>PNG format (*.png *.PNG)</option></select><svg class="s16"><use href="#i-chev"/></svg></div>
  </div>
  <footer>
    <button type="button" class="plain hide"><svg viewBox="0 0 18 12"><path d="m2 10 7-7 7 7" fill="none" stroke="#222" stroke-width="3"/></svg>隐藏文件夹</button>
    <button type="button" class="act push primary">保存(S)</button>
    <button type="button" class="act">取消</button>
  </footer>
  <svg class="corner" viewBox="0 0 18 18"><path d="M14 2h3M8 8h3M14 8h3M2 14h3M8 14h3M14 14h3" stroke="#bbb" stroke-width="4"/></svg>
</section>

<svg class="marks" viewBox="0 0 1440 1030" aria-hidden="true">
  <g fill="none" stroke="#ff3838" stroke-width="3"><path d="M19 58h1413v964H19zM250 760h226v45H250zM998 901h209v86H998z"/></g>
  <path d="M451 560 366 745l5 2-17 14-2-22 5 3zM873 825 988 906l1-6 2 25-15-7 5-2z" fill="#ff3838"/>
</svg>
<p class="note">为图片重命名，选择要保存的位置，<br>然后保存</p>
</body>
</html>
```
FILE: styles.css
```css
* { box-sizing: border-box; }
:root {
  --ui: "Open Sans", "Noto Sans CJK SC", sans-serif;
  --song: "Liberation Mono", "Noto Sans CJK SC", monospace;
  --line: #a9a9a9;
  --land: #0a74ff;
}
body { margin: 0; height: 100vh; display: flex; flex-direction: column; position: relative; overflow: hidden; background: #b5b09b; font: 24px/32px var(--ui); color: #000; }
h1, h2, h3, p, ul, figure { margin: 0; padding: 0; font: inherit; list-style: none; }
button, input, select { font: inherit; color: inherit; margin: 0; padding: 0; }
a { color: inherit; text-decoration: none; }
svg { display: block; flex: none; }
.defs { position: absolute; width: 0; height: 0; }
.s14 { width: 14px; height: 14px; } .s16 { width: 16px; height: 16px; } .s18 { width: 18px; height: 18px; }
.s20 { width: 20px; height: 20px; } .s22 { width: 22px; height: 22px; } .s24 { width: 24px; height: 24px; }
.s26 { width: 26px; height: 26px; } .s28 { width: 28px; height: 28px; } .s30 { width: 30px; height: 30px; }
.s32 { width: 32px; height: 32px; } .s34 { width: 34px; height: 34px; } .s44 { width: 44px; height: 44px; }
.s46 { width: 46px; height: 34px; } .s48 { width: 48px; height: 46px; }
.caret { width: 16px; height: 9px; }
.push { margin-left: auto; }
.plain { border: 0; background: none; display: flex; align-items: center; justify-content: center; }

.desktop-strip { height: 13px; flex: none; background: #000; padding: 0 518px 0 442px; }
.taskbar { width: 100%; height: 13px; background: linear-gradient(90deg, #d5d4c8, #d2d7cf 22%, #efe8b8 27%, #ecd9c8 32%, #dfe3cf 40%, #dfe1cc 60%, #efeab9 73%, #f2ddd0 86%, #ece0cc); }

.app { flex: 1; min-height: 0; display: flex; flex-direction: column; background: #efefef; margin-bottom: 2px; }
.titlebar { height: 46px; flex: none; background: #f3f3f3; display: flex; align-items: center; color: #999; padding-left: 2px; }
.titlebar h1 { margin-left: 7px; }
.winbtns { margin-left: auto; display: flex; padding-right: 3px; }
.winbtns button { width: 92px; height: 46px; border: 0; background: none; display: flex; align-items: center; justify-content: center; color: #999; }
.menubar { height: 41px; flex: none; border-bottom: 2px solid #d5d5d5; padding: 2px 0 0 1411px; color: #a2a2a2; }

.toolbar { height: 77px; flex: none; display: flex; align-items: center; background: linear-gradient(#fcfcfc, #eee); border-bottom: 2px solid #b5b5b5; }
.toolbar-a { padding-left: 1444px; }
.toolbar-b { height: 78px; padding-left: 1421px; }
.toolbar button { width: 66px; height: 66px; border: 0; background: none; display: flex; align-items: center; justify-content: center; flex: none; }
.toolbar .drop { width: 90px; gap: 14px; padding-left: 5px; }
.toolbar .blue { color: #6a94cc; }
.toolbar .muted { opacity: .4; color: #888; }
.grip { width: 32px; display: flex; justify-content: center; padding-left: 10px; flex: none; }
.toolbar-a .grip { width: 31px; }
.grip svg { width: 8px; height: 36px; }
.sep { width: 2px; height: 38px; background: #ddd; margin: 0 7px; }
.tagtext { font: 15px "Liberation Serif", serif; fill: #333; text-anchor: middle; }
.tagtext.red { fill: #f02020; }
.bold { font: bold 18px "Liberation Mono", monospace; text-anchor: middle; fill: #111; }
.bold.big { font: bold 23px "Open Sans", sans-serif; fill: #333; }
.a { font: 19px "Open Sans", sans-serif; text-anchor: middle; fill: #444; }

.workspace { flex: 1; display: flex; min-height: 0; }
.leftdock { width: 355px; flex: none; margin-right: 13px; display: flex; flex-direction: column; }
.leftdock h2 { padding-left: 8px; line-height: 42px; }
.browser { height: 297px; margin-top: 60px; border: 2px solid #bbb; background: #fff; border-bottom-width: 28px; border-bottom-color: #ececec; }
.layertools { height: 46px; margin: 14px 8px 10px; border: 2px solid var(--line); border-radius: 5px; }
.layers { flex: 1; background: #fff; border: 1px solid #b5b5b5; }
.canvas { flex: 1; min-width: 0; display: flex; flex-direction: column; background: #fff; border: solid #b5b5b5; border-width: 0 1px 1px; }
.message { height: 57px; flex: none; background: #ffc800; border: 2px solid #dea300; display: flex; align-items: center; justify-content: flex-end; padding-right: 41px; font-family: var(--song); font-weight: 300; }
.pager { display: grid; gap: 2px; margin-right: 12px; }
.pager button { width: 28px; height: 20px; line-height: 14px; background: #ffc800; border: 2px outset #c9b060; }
.message .btn { width: 160px; height: 40px; margin-right: 52px; }
.round { width: 34px; height: 34px; border: 0; background: none; }
.map { width: 100%; flex: 1; min-height: 0; }
.land path { fill: var(--land); stroke: #222; stroke-width: 2px; vector-effect: non-scaling-stroke; stroke-linejoin: round; }
.land .ln { fill: none; }
.names text { font: 300 25px "Noto Sans CJK SC", sans-serif; text-anchor: middle; fill: #2b3550; }

.btn { border: 2px solid var(--line); border-radius: 6px; background: linear-gradient(#fff, #ededed); display: flex; align-items: center; justify-content: center; font-family: var(--song); font-weight: 300; }
.btn[disabled] { opacity: .5; }
.combo { height: 46px; flex: none; border: 2px solid var(--line); border-radius: 6px; background: linear-gradient(#fff, #ededed); display: flex; align-items: center; padding: 0 14px 0 8px; font-family: var(--song); font-weight: 300; }
select { flex: 1; min-width: 0; appearance: none; border: 0; background: none; height: 36px; }
.combo select { padding: 2px 0 0 9px; }
input[type=text] { border: 0; background: none; min-width: 0; flex: 1; outline: 0; }

.styling { width: 832px; flex: none; padding: 0 6px 4px 20px; display: flex; flex-direction: column; position: relative; }
.dockhead { height: 42px; flex: none; display: flex; align-items: center; gap: 6px; }
.dockhead h2 { flex: 1; padding-left: 2px; }
.dockhead button { width: 22px; height: 22px; border: 0; background: none; }
.layer { margin-top: 4px; }
.stylebody { flex: 1; display: flex; margin-top: 11px; gap: 6px; min-height: 0; }
.tabs { width: 76px; flex: none; background: #5d5d5d; display: flex; flex-direction: column; }
.tabs button { height: 64px; flex: none; border: 0; background: none; display: flex; align-items: center; justify-content: center; padding-right: 16px; }
.tabs .s44 { height: 40px; } .tabs .s48 { height: 30px; }
.tabs .on { height: 66px; background: #efefef; padding-right: 6px; }
.props { flex: 1; min-width: 0; min-height: 0; display: flex; flex-direction: column; padding-top: 14px; }
.symbol { display: grid; grid-template-columns: 212px 1fr 120px; height: 252px; flex: none; margin: 14px 0; }
.preview { display: flex; align-items: center; padding-left: 40px; }
.preview span { width: 122px; height: 122px; background: var(--land); border: 2px solid #222; }
.tree { background: #fff; border: 1px solid #b5b5b5; }
.tree li { display: flex; align-items: center; height: 36px; gap: 12px; }
.tree .root { background: #efefef; padding-left: 13px; }
.tree .root .caret { margin-right: 6px; }
.tree .leaf { padding-left: 87px; }
.tree i { width: 32px; height: 32px; background: var(--land); border: 1px solid #222; }
.symbtns { margin-left: auto; display: grid; grid-template-columns: 46px 46px; grid-auto-rows: 46px; gap: 8px 14px; align-content: start; }
.symbtns svg { width: 28px; height: 28px; }
hr { width: 100%; height: 2px; border: 0; margin: 0; background: linear-gradient(#999 50%, #fff 50%); flex: none; }
.inset { flex: 1; min-height: 0; padding: 16px 18px 0 0; display: flex; flex-direction: column; }
.row { display: flex; align-items: center; font-family: var(--song); font-weight: 300; flex: none; }
.inset > .row { margin-bottom: 18px; min-height: 40px; }
.row > label[for] { width: 109px; padding-top: 4px; white-space: nowrap; }
.color { flex: 1; height: 44px; padding: 4px 7px; }
.color span { width: 100%; height: 100%; background: var(--land); border-radius: 5px; }
.slim { width: 24px; height: 44px; margin-left: 2px; }
input[type=range] { appearance: none; flex: 1; min-width: 0; height: 26px; margin: 0 8px 0 0; background: none; }
input[type=range]::-webkit-slider-runnable-track { height: 10px; border: 2px solid var(--line); border-radius: 4px; background: #f4f4f4; }
input[type=range]::-webkit-slider-thumb { appearance: none; width: 26px; height: 26px; margin-top: -10px; border: 2px solid var(--line); border-radius: 6px; background: #fff; }
.spin { width: 177px; height: 40px; border: 2px solid var(--line); border-radius: 6px; background: #fff; display: flex; font-size: 18px; font-family: "Liberation Mono", monospace; padding-left: 8px; }
.spin div { width: 28px; border-left: 2px solid #bbb; display: grid; }
.spin button { border: 0; background: none; padding: 0; display: flex; align-items: center; justify-content: center; }
.spin svg { width: 16px; height: 9px; } .dim { opacity: .5; }
.alpha { width: 200px; font-size: 20px; margin-right: 18px; }
.row .plain .s46 { margin-right: 8px; }
.unit { flex: 1; height: 44px; padding-left: 0; }
.inset > .row:nth-child(3) { margin-bottom: 8px; }
.inset > .fav { margin: 11px 0 10px; }
.searchbox { width: 647px; height: 44px; border: 2px solid var(--line); border-radius: 6px; background: #fff; display: flex; align-items: center; padding-left: 20px; }
.searchbox input { padding: 3px 0 0 13px; }
.searchbox .plain { width: 42px; height: 40px; border-left: 2px solid #bbb; margin-left: 16px; }
.fav > .plain { margin-left: auto; margin-right: 10px; }
.library { flex: 1 1 0; min-height: 0; display: flex; background: #fff; border: 2px solid #bbb; overflow: hidden; }
.shelf { flex: 1; min-width: 0; overflow: hidden; padding: 14px 14px 0 9px; }
.shelf h3 { font: bold 34px/38px var(--ui); border-bottom: 2px solid #c4c4c4; margin-bottom: 12px; }
.swatches { display: grid; grid-template-columns: 260px 260px; grid-auto-rows: 284px; padding-top: 27px; margin-left: -5px; }
.swatches figure { display: flex; flex-direction: column; align-items: center; }
.swatches svg { width: 128px; height: 110px; }
.swatches figcaption { margin-top: 62px; white-space: nowrap; }
.vbar { width: 28px; flex: none; background: #e5e5e5; border-left: 1px solid #bbb; display: flex; flex-direction: column; }
.vbar button { height: 28px; border: 0; background: #fafafa; display: flex; align-items: center; justify-content: center; }
.vbar .thumb { height: 109px; background: #fbfbfb; border: solid #bbb; border-width: 2px 0; }
.vbar .end { margin-top: auto; border-top: 2px solid #bbb; }
.inset > .views { margin: 13px 0 0; }
.sq { width: 48px; height: 46px; }
.sq.on { background: #dcdcdc; }
.views .plain { margin-left: 10px; }
.wide { width: 160px; height: 40px; font-family: "Noto Sans CJK SC", sans-serif; }
.views .menu { margin-left: 12px; }
.menu span { flex: 1; text-align: center; padding-left: 2px; }
.menu svg { width: 12px; height: 8px; margin-right: 8px; }
.render { height: 90px; flex: none; padding: 27px 0 0 9px; display: flex; align-items: center; gap: 22px; }
.render b { font-weight: 500; }
.render svg { width: 16px; height: 24px; }
.apply .sq + .sq { margin-left: 12px; }
.check { display: flex; align-items: center; gap: 11px; }
.check input { appearance: none; width: 27px; height: 27px; border: 2px solid #bbb; background: #fff; display: grid; place-items: center; }
.check input:checked::after { content: "✔"; font: 25px/25px "DejaVu Sans", sans-serif; }
.apply .wide { margin-left: 34px; }
.watermark { position: absolute; left: 315px; bottom: 22px; color: rgba(120, 120, 120, .5); font-size: 28px; line-height: 40px; white-space: nowrap; pointer-events: none; }
.watermark .big { font-size: 40px; line-height: 50px; }

.status { height: 57px; flex: none; display: flex; align-items: center; padding: 4px 14px 0 8px; font: 300 22px/30px var(--song); position: relative; white-space: nowrap; }
.locator, .scale, .field { height: 44px; border: 2px solid var(--line); border-radius: 6px; background: #fff; display: flex; align-items: center; }
.locator { width: 400px; padding-left: 16px; }
.locator input { padding-left: 16px; font-size: 20px; }
.locator input::placeholder { color: #888; opacity: 1; }
.status .first { margin-left: auto; }
.status > label[for] { margin-right: 6px; }
.status .field { flex: none; width: 228px; border: 2px solid var(--line); background: #fff; padding-left: 6px; font-size: 18px; }
.mouse { width: 30px; height: 34px; margin-left: 8px; }
.scale { width: 164px; padding-left: 7px; font-size: 18px; }
.scale .plain { width: 38px; height: 40px; border-left: 2px solid #bbb; }
.lock { width: 24px; height: 32px; margin-left: 24px; }
.g12 { margin-left: 12px; } .g18 { margin-left: 18px; } .g30 { margin-left: 30px; }
.status .spin.g18 { margin-left: 12px; }
.crs { display: flex; align-items: center; gap: 4px; font-size: 18px; }
.bubble { width: 32px; height: 32px; margin-left: 63px; }
.credit { position: absolute; right: 14px; bottom: 3px; font: 14px/18px "Liberation Sans", sans-serif; color: #999; }

.dialog { position: absolute; left: 13px; top: 59px; width: 1416px; background: #fff; border-radius: 0 0 16px 16px; box-shadow: 0 0 0 2px rgba(0, 0, 0, .25), 0 50px 100px rgba(0, 0, 0, .4); }
.dialog header { height: 57px; background: #f7f3eb; display: flex; align-items: center; padding: 0 24px 0 13px; }
.dialog header h2 { flex: 1; padding-left: 5px; }
.nav { height: 91px; display: flex; align-items: center; color: #555; padding-right: 14px; }
.arrows { width: 273px; display: flex; align-items: center; justify-content: space-between; padding: 0 26px 0 30px; }
.fwd { color: #aaa; }
.address, .find { height: 70px; border: 1px solid #d5d5d5; display: flex; align-items: center; }
.address { flex: 1; padding: 0 24px 0 14px; gap: 11px; margin-right: 12px; }
.address a { color: #000; }
.address .plain + .plain { margin-left: 36px; }
.find { width: 406px; padding: 0 22px 0 12px; }
.find input::placeholder { color: #666; opacity: 1; }
.tools { height: 61px; background: #f4f6f9; border-bottom: 1px solid #e2e2e2; display: flex; align-items: center; padding: 0 31px 0 35px; color: #24406b; }
.tools .plain + .plain { margin-left: 58px; }
.tools .plain svg:not([class]) { width: 8px; height: 5px; margin-left: 9px; }
.tools .plain.view { margin-left: auto; }
.tools .view svg:not([class]) { margin-left: 16px; }
.files { height: 478px; display: flex; overflow: hidden; }
.places { width: 279px; display: flex; flex-direction: column; flex: none; }
.places a { height: 64px; flex: none; display: flex; align-items: center; gap: 5px; padding: 0 6px 0 61px; border: 1px solid transparent; margin-left: 6px; }
.places .od { padding-left: 22px; }
.places .od .s14 { margin-right: 20px; color: #888; }
.places hr { width: 243px; margin: 32px 0 31px 20px; background: #d5d5d5; }
.places .on { background: #cce8ff; border-color: #99d1ff; }
.pin { width: 22px; height: 22px; margin-left: auto; }
.placebar { width: 33px; background: #efefef; padding: 97px 7px 0; flex: none; }
.placebar span { display: block; width: 19px; background: #858585; height: 123px; }
.listing { flex: 1; min-width: 0; position: relative; overflow: hidden; padding-left: 3px; display: flex; flex-direction: column; }
.sort { position: absolute; left: 329px; top: 1px; width: 16px; height: 9px; color: #777; }
table { table-layout: fixed; width: 1240px; border-collapse: collapse; }
.c1 { width: 616px; } .c2 { width: 324px; } .c3 { width: 300px; }
th { padding: 0 0 11px; height: 62px; text-align: left; font-weight: 400; color: #4a6080; }
th span { display: block; line-height: 51px; border-right: 1px solid #e5e5e5; padding: 2px 0 0 13px; height: 51px; }
th:first-child span { padding-left: 65px; }
td { height: 62px; padding: 0 0 2px 13px; color: #6d6d6d; white-space: nowrap; }
td:first-child { padding-left: 41px; color: #000; }
td svg { display: inline-block; vertical-align: middle; margin: -4px 10px 0 0; }
.hbar { margin: auto 0 0 5px; height: 32px; background: #efefef; padding: 7px 0 0 33px; }
.hbar span { display: block; width: 799px; height: 19px; background: #858585; }
.fields { height: 131px; background: #f9f9f9; display: grid; grid-template-columns: 240px 1fr; grid-auto-rows: 39px; row-gap: 4px; column-gap: 10px; padding: 23px 12px 0 0; }
.fields label { text-align: right; line-height: 40px; }
.fbox { border: 1px solid #ccc; background: #fdfdfd; display: flex; align-items: center; padding: 0 7px 0 3px; color: #555; }
.fbox input, .fbox select { color: #000; }
.fbox.strong { border-color: #888; background: #fff; }
.dialog footer { height: 128px; background: #efefef; border-radius: 0 0 16px 16px; display: flex; align-items: center; padding: 28px 39px 0 17px; }
.dialog footer .push { margin-left: auto; }
.hide svg { width: 18px; height: 12px; margin-right: 11px; }
.hide { padding-top: 12px; }
.act { width: 174px; height: 50px; border: 1px solid #ccc; border-radius: 6px; background: #fdfdfd; }
.act.primary { border: 1px solid #0078d4; margin-right: 26px; }
.dialog .corner { position: absolute; right: 6px; bottom: 8px; width: 18px; height: 18px; }
.marks { position: absolute; left: 0; top: 0; width: 1440px; height: 1030px; pointer-events: none; }
.note { position: absolute; left: 227px; top: 879px; font-size: 48px; line-height: 62px; color: #ff3838; white-space: nowrap; }
```
